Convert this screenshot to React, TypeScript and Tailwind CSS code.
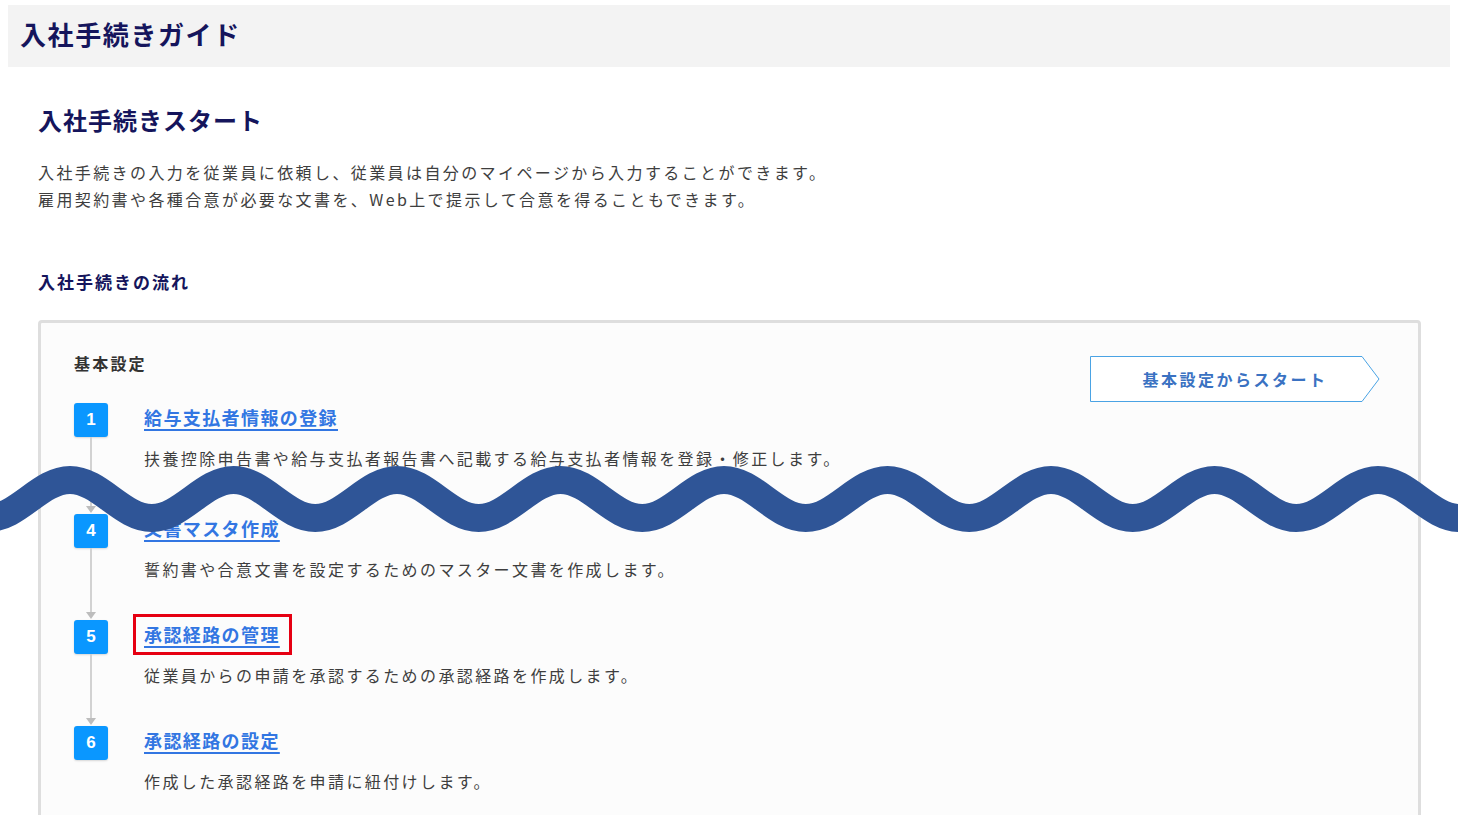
import React from 'react'

const JP = { fontFamily: '"Noto Sans CJK JP", "Noto Sans", sans-serif' }

const STEPS = [
  { no: 1, title: '給与支払者情報の登録', desc: '扶養控除申告書や給与支払者報告書へ記載する給与支払者情報を登録・修正します。', pb: 'pb-[42px]' },
  { no: 4, title: '文書マスタ作成', desc: '誓約書や合意文書を設定するためのマスター文書を作成します。', pb: 'pb-[37px]' },
  { no: 5, title: '承認経路の管理', desc: '従業員からの申請を承認するための承認経路を作成します。', pb: 'pb-[37px]', marked: true },
  { no: 6, title: '承認経路の設定', desc: '作成した承認経路を申請に紐付けします。', pb: 'pb-[40px]', last: true },
]

// sine-like wave drawn as cubic segments
const wavePath = () => {
  const P = 163.5
  const h = P / 2
  const k = 0.3642
  const yC = 40
  const yT = 78
  let x = 70 - 2 * P
  let up = true
  let d = `M ${x} ${yC}`
  while (x < 1458 + P) {
    const y0 = up ? yC : yT
    const y1 = up ? yT : yC
    const nx = x + h
    d += ` C ${x + k * h} ${y0} ${nx - k * h} ${y1} ${nx} ${y1}`
    x = nx
    up = !up
  }
  return d
}

const Step: React.FC<{ no: number; title: string; desc: string; pb: string; marked?: boolean; last?: boolean }> = ({
  no,
  title,
  desc,
  pb,
  marked,
  last,
}) => (
  <div className="flex">
    <div className="w-[34px] flex flex-col items-center shrink-0">
      <div
        className="w-[34px] h-[34px] rounded-[3px] bg-[#0a97ff] text-white flex items-center justify-center text-[17px] font-bold shadow-[0_1px_2px_rgba(0,0,0,0.15)]"
        style={{ fontFamily: '"Liberation Sans", Arial, sans-serif' }}
      >
        {no}
      </div>
      {!last && (
        <div className="flex-1 flex flex-col items-center">
          <div className="flex-1 w-[2px] bg-[#d2d2d2]" />
          <div className="w-0 h-0 border-l-[5px] border-r-[5px] border-t-[7px] border-l-transparent border-r-transparent border-t-[#bdbdbd] mb-[1px]" />
        </div>
      )}
    </div>
    <div className={`ml-[36px] ${pb}`}>
      <div className="relative inline-block">
        <a
          href="#"
          className="block h-[28px] leading-[28px] text-[18px] font-bold tracking-[1.4px] text-[#3276e2] underline underline-offset-[4px] decoration-[1.5px]"
        >
          {title}
        </a>
        {marked && (
          <span className="absolute -left-[11px] -right-[12px] -top-[6px] -bottom-[7px] border-[3px] border-[#e60012] pointer-events-none" />
        )}
      </div>
      <p className="mt-[14px] text-[16px] leading-[27px] tracking-[2.4px] text-[#3e3e3e]">{desc}</p>
    </div>
  </div>
)

export default function App() {
  return (
    <div className="relative min-h-screen bg-white overflow-hidden px-[8px] pt-[5px]" style={JP}>
      <div className="h-[62px] bg-[#f3f3f3] flex items-center pl-[12px]">
        <h1 className="text-[26px] font-bold tracking-[1.6px] text-[#15155c] leading-none -mt-[4px]">入社手続きガイド</h1>
      </div>

      <div className="pl-[30px] pr-[29px]">
        <h2 className="mt-[35px] text-[24px] leading-[36px] font-bold tracking-[1px] text-[#15155c]">入社手続きスタート</h2>
        <p className="mt-[21px] text-[16px] leading-[27px] tracking-[2.4px] text-[#3e3e3e]">
          入社手続きの入力を従業員に依頼し、従業員は自分のマイページから入力することができます。
          <br />
          雇用契約書や各種合意が必要な文書を、Web上で提示して合意を得ることもできます。
        </p>
        <h3 className="mt-[57px] text-[17px] leading-[24px] font-bold tracking-[2px] text-[#15155c]">入社手続きの流れ</h3>

        <div className="mt-[26px] border-[3px] border-[#dedede] rounded-[4px] bg-[#fcfcfc] pl-[33px] pr-[38px] pt-[28px] flex justify-between items-start">
          <div>
            <h4 className="text-[16px] leading-[24px] font-bold tracking-[2.2px] text-[#333]">基本設定</h4>
            <div className="mt-[28px]">
              {STEPS.map((s) => (
                <Step key={s.no} {...s} />
              ))}
            </div>
          </div>
          <button className="relative mt-[5px] w-[290px] h-[46px] flex items-center justify-center">
            <svg className="absolute inset-0" width="290" height="46" viewBox="0 0 290 46">
              <polygon points="0.5,0.5 272,0.5 289,23 272,45.5 0.5,45.5" fill="#ffffff" stroke="#4aa3e4" strokeWidth="1" />
            </svg>
            <span className="relative text-[16px] font-bold tracking-[2.5px] text-[#3a72c2]">基本設定からスタート</span>
          </button>
        </div>
      </div>

      <svg className="absolute left-0 top-[440px] pointer-events-none" width="1458" height="110" viewBox="0 0 1458 110">
        <path d={wavePath()} fill="none" stroke="#2f5597" strokeWidth="28" />
      </svg>
    </div>
  )
}
